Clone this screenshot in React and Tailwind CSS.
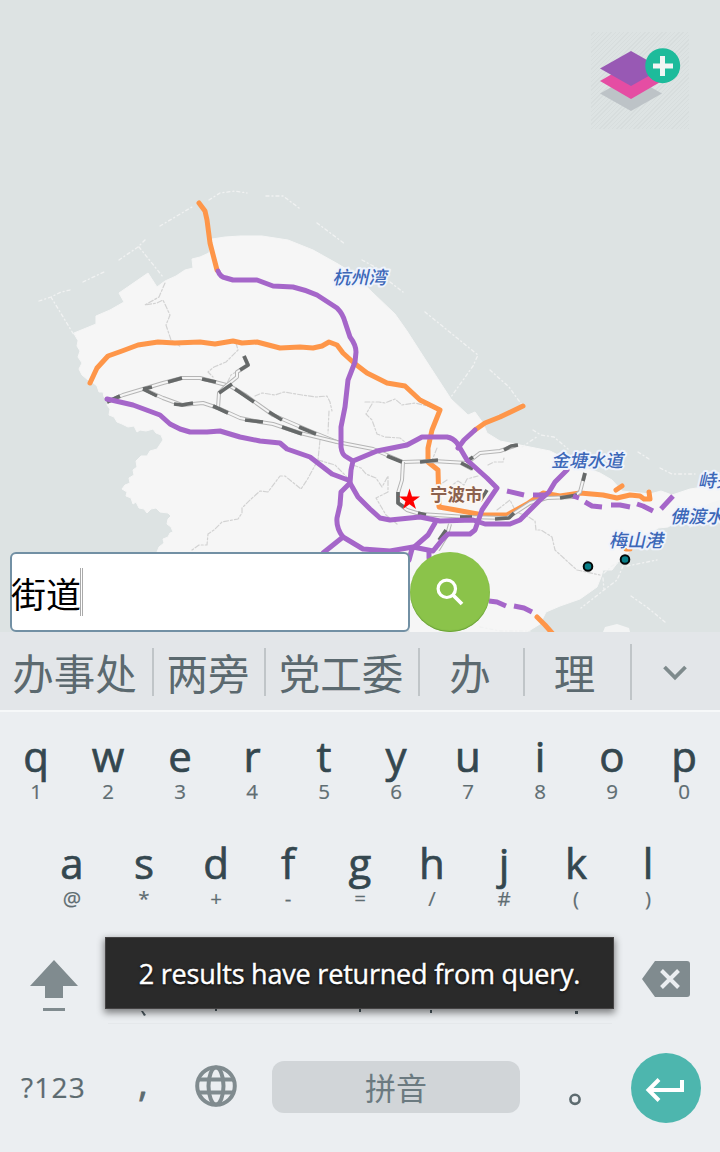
import React from "react";

const LAND =
  "M74 333L96 324L96 316L110 310L124 302L119 293L148 273L157 287L165 281L176 276L185 270L193 268L192 259L200 257L209 253L212 239L225 237L240 236L262 236L288 240L313 250L338 264L356 275L372 292L395 314L407 331L425 359L451 399L468 415L475 412L483 423L487 433L500 441L530 447L550 451L580 466L600 473L612 480L622 491L650 494L661 491L672 495L690 489L710 486L720 480V520L700 508L690 514L668 527L658 528L645 538L628 553L618 562L612 570L603 570L601 577L597 587L580 599L560 606L546 612L540 624L527 632H410V552H157L159 547L164 543L163 539L168 537L170 533L173 532L171 527L167 524L168 519L171 516L168 513L160 512L156 508L151 509L147 513L144 509L139 508L136 502L133 504L131 498L126 496L127 492L122 489L125 485L130 483L129 478L134 475L133 470L137 467L136 461L141 456L147 456L150 451L157 449L163 440L161 435L156 433L153 429L146 431L140 430L137 432L134 426L128 427L122 424L117 422L114 417L109 415L110 409L107 405L108 400L104 397L103 392L99 392L97 386L92 382L88 380L82 375L79 369L82 363L78 357L80 351L77 346L78 341Z";

const PURPLE = [
  "M218 271Q220 277 226 278L233 280H257L273 286L293 287Q306 290 317 295L337 308Q343 314 345 322L350 337Q356 345 356 352L355 362L348 380L345 407L341 427V447Q342 454 345 456L353 461",
  "M353 461L377 451L407 445L422 437H447Q453 438 457 443L467 460L487 478L497 488L482 510L475 530L470 534H448L442 540L433 551L413 547L390 551L363 549L343 537Q336 528 337 518L340 505L341 492L350 483L351 470Z",
  "M350 483L358 497L370 509L380 518L390 520L420 517L440 521L473 520L485 524H510L520 520L540 500L549 492L555 482L567 470",
  "M107 399L133 405L160 415L170 424L180 429L190 432L207 432L220 431L240 437L260 441L280 443L287 449L310 457L332 474L348 480",
  "M343 537L323 553",
  "M435 523L428 535L412 549L409 560",
  "M458 448L464 440L475 430",
  "M429 551V558",
  "M507 491L524 495M533 495H545M573 496L579 498M585 502L592 506L602 507M611 505H620L630 507M637 504L643 506L653 511M661 509L673 496",
  "M489 601L497 602L506 606M514 606L524 608L532 612",
];

const ORANGE = [
  "M199 203L205 211L207 220L210 243L217 270",
  "M90 383L97 368L108 356L122 351L138 345L158 342L175 343L200 342L215 344L233 341L242 343L257 342L280 348L300 347L313 348L322 346L329 342L337 345L343 353L354 363L367 373L387 383L405 386L420 400L430 405L440 410L432 430L428 448L428 462L438 470L439 507L456 510L483 515H507L527 504L543 493L560 496L580 493L603 495L617 498L630 495L640 496L644 499L650 499L649 492",
  "M616 490L622 486",
  "M475 430L485 423L500 417L523 406",
  "M537 617L545 625L553 634",
  "M626 549H630",
];

const RAILS = [
  "M107 402L123 395L143 389L163 383L182 378L200 378L215 382L230 386L245 395L273 415L310 431L337 442L373 449L403 462L433 461L467 463L480 453L500 451L517 445",
  "M143 389L163 398L182 405L203 403L218 408L240 418L260 422L273 424L300 433L337 442",
  "M218 408L219 393L226 386L237 377L237 372L248 365L244 356",
  "M403 462L402 480L398 493V503L407 510L420 514L467 517L507 518L530 503L547 498L573 497L580 492L585 473",
  "M450 524L447 535L438 550",
  "M461 463L472 469",
];

const RAIL_DARK =
  "M107 402L120 396M143 389L152 387M143 389L157 396M168 382L182 378M202 379L216 382M235 389L254 402M269 412L282 420M299 427L316 434M174 404L182 405L193 403M213 406L228 413M245 420L263 422M282 427L302 434M219 393L232 384M240 370L248 365L244 356M387 456L402 462M420 462L438 460M461 463L473 469M466 462L473 457M504 450L511 446L518 445M398 492V503L404 507M418 513L426 515M460 517L472 517M480 501L487 490M495 519L509 518L514 513M560 498L577 495M583 481L585 473M439 540L446 530";

const BORDERS =
  "M165 283L159 297L145 305L157 303L163 300L170 315L166 325L171 340L181 347M236 343L238 350L226 362L214 367L208 372L213 377M247 365L231 375L224 390M255 396L262 393L275 395L284 392L302 395L316 397L327 396L330 402L332 411M329 411L328 433M320 440L318 460L307 480L301 489L285 476L280 476L268 492L260 491L250 500L242 508L242 513L238 519L222 522L214 530L208 534L207 545L199 545L192 550M365 402L379 402L385 403L395 399L402 405L415 403L440 409M372 404L366 414L372 420L377 434L385 437L400 438L410 446M318 460L335 465L348 478M353 465L361 468L366 474L376 478L382 487L388 476L388 492L376 498L386 515L397 524M488 465L494 462L503 462L504 458M497 510L510 500L516 512L527 516L535 521L536 530L541 530L552 537L555 550L568 562L577 570L600 575M447 480L435 488M448 488L458 481L464 485L467 479L478 476M431 463L437 448";

const SEA_BORDERS =
  "M39 301L51 297L61 292L70 290M83 282L106 271M119 260L138 247L145 240M160 226L192 207M209 200L220 193L235 191L247 193M266 196L283 196L299 208M317 223L345 244M362 260L377 268M390 282L403 292M425 312L478 355L473 366L451 397M51 297L74 335M139 247L163 277M490 370L509 387L522 405M533 430L541 435L554 437L568 449M522 447L538 436M638 452L649 459M660 468L672 474H695M604 573L612 566L626 558M627 566L657 560M623 566L617 580L604 590L581 608M603 578L604 590M631 596L648 608L665 622M480 627L500 631H530M690 527L704 518";

function MapLabel({ x, y, size, children }) {
  return (
    <text
      transform={`translate(${x} ${y}) skewX(-13)`}
      fontSize={size}
      fontWeight="500"
      fontFamily="'Noto Sans CJK SC', sans-serif"
      fill="#3c67b8"
      stroke="#eef3fc"
      strokeWidth="4"
      strokeLinejoin="round"
      paintOrder="stroke"
    >
      {children}
    </text>
  );
}

function MapCanvas() {
  return (
    <svg className="block h-[632px] w-[720px]" viewBox="0 0 720 632" fill="none" strokeLinejoin="round" strokeLinecap="round">
      <rect width="720" height="632" fill="#dde3e3" />
      <path d={LAND} fill="#f6f6f6" stroke="#f6f6f6" />
      <path d="M603 632L605 627L617 624L629 628L630 632ZM700 512L710 503L720 500V520L710 520Z" fill="#f3f4f4" />
      <path d={SEA_BORDERS} stroke="#f1f2f2" strokeWidth="1.3" strokeDasharray="3 3 1 3" />
      <path d={BORDERS} stroke="#d2d2d2" strokeWidth="1.2" strokeDasharray="5 2 2 2" />
      {ORANGE.map((d) => (
        <path key={d} d={d} stroke="#fe9649" strokeWidth="5" />
      ))}
      {RAILS.map((d) => (
        <g key={d} strokeLinecap="butt">
          <path d={d} stroke="#b5b5b5" strokeWidth="4" />
          <path d={d} stroke="#f5f5f5" strokeWidth="2" />
        </g>
      ))}
      <path d={RAIL_DARK} stroke="#666969" strokeWidth="3.6" strokeLinecap="butt" />
      {PURPLE.map((d) => (
        <path key={d} d={d} stroke="#a566c9" strokeWidth="5" strokeLinecap={d.split("M").length > 2 ? "butt" : "round"} />
      ))}
      <path d="M409.500 488.500L412 496.500H420L413.500 501.300L416 509L409.500 504.200L403 509L405.500 501.300L399 496.500H407Z" fill="#fe0000" />
      <text x="430" y="501" fontSize="17.500" fontWeight="700" fontFamily="'Noto Sans CJK SC', sans-serif" fill="#8c614d" stroke="#fcf7f2" strokeWidth="4" paintOrder="stroke">
        宁波市
      </text>
      <MapLabel x={332.500} y={284} size={18}>杭州湾</MapLabel>
      <MapLabel x={551} y={466.500} size={18}>金塘水道</MapLabel>
      <MapLabel x={698} y={487} size={18}>峙头洋</MapLabel>
      <MapLabel x={670} y={523} size={18}>佛渡水道</MapLabel>
      <MapLabel x={609} y={547} size={18}>梅山港</MapLabel>
      <circle cx="588" cy="566.500" r="4.300" fill="#087e88" stroke="#050808" strokeWidth="2" />
      <circle cx="625" cy="559.500" r="4.300" fill="#087e88" stroke="#050808" strokeWidth="2" />
    </svg>
  );
}

function LayersButton() {
  return (
    <button className="absolute left-[591px] top-[32px] h-[97px] w-[98px] bg-[repeating-linear-gradient(135deg,#0000_0_2px,#00000007_2px_3px)]">
      <svg className="block h-[97px] w-[98px]" viewBox="591 32 98 97">
        <path d="M600 93.500L631 76L662 93.500L631 111Z" fill="#bdc3c7" />
        <path d="M600 81L631 63L662 81L631 99Z" fill="#e54da3" />
        <path d="M600 68.500L631 51L662 68.500L631 86Z" fill="#9859b4" />
        <circle cx="662.700" cy="65.700" r="17.500" fill="#1dbb9b" />
        <path d="M660 56H665V63.500H673V68.500H665V76H660V68.500H653V63.500H660Z" fill="#f1f5f4" />
      </svg>
    </button>
  );
}

function SearchBar() {
  return (
    <div className="absolute left-[10px] top-[552px] flex h-[80px]">
      <div className="flex h-[80px] w-[400px] items-center rounded-[6px] border-2 border-[#7290a4] bg-white">
        <span className="-ml-px mt-px font-['Noto_Sans_CJK_SC',sans-serif] text-[35px] leading-[40px] text-black">街道</span>
        <span className="-ml-px h-[48px] w-[3px] border-x border-[#aaaaaa]" />
      </div>
      <button className="flex size-[80px] items-center justify-center rounded-full bg-[#8bc34a] shadow-[inset_0_-1px_1px_#689f38]">
        <svg className="size-[80px]" viewBox="0 0 80 80" fill="none" stroke="#fff">
          <circle cx="36.800" cy="36.800" r="8.700" strokeWidth="3.200" />
          <path d="M43 43L52 52" strokeWidth="3.800" />
        </svg>
      </button>
    </div>
  );
}

function Candidate({ width, children }) {
  return (
    <div className={`${width} relative flex h-full items-center justify-center`}>
      <span className="mt-[2px]">{children}</span>
      <span className="absolute right-0 top-[16px] h-[48px] w-[2px] bg-[#c0c5c8]" />
    </div>
  );
}

function CandidateBar() {
  return (
    <div className="flex h-[80px] border-b-2 border-[#f6f8f9] bg-[#e3e6e9] font-['Noto_Sans_CJK_SC',sans-serif] text-[41.500px] leading-[60px] text-[#5b696f]">
      <Candidate width="w-[154px] pr-[5px]">办事处</Candidate>
      <Candidate width="w-[112px] pr-[4px]">两旁</Candidate>
      <Candidate width="w-[154px] pr-[4px]">党工委</Candidate>
      <Candidate width="w-[105px] pr-[5px]">办</Candidate>
      <div className="flex w-[105px] items-center justify-center pr-[6px]">
        <span className="mt-[2px]">理</span>
      </div>
      <div className="mt-[12px] h-[56px] w-[2px] bg-[#c0c5c8]" />
      <svg className="h-[78px] w-[88px]" viewBox="632 632 88 78" fill="none">
        <path d="M664.500 667L675 677.500L685.500 667" stroke="#7e8a8c" strokeWidth="3.800" />
      </svg>
    </div>
  );
}

function Key({ label, sub }) {
  return (
    <div className="flex w-[72px] flex-col items-center">
      <span className="h-[46px] text-[42px] leading-[46px] text-[#34474f] [-webkit-text-stroke:0.7px_#34474f]">{label}</span>
      <span className="h-[24px] text-[20.500px] leading-[24px] text-[#5f6d72] [-webkit-text-stroke:0.2px_#5f6d72]">{sub}</span>
    </div>
  );
}

const ROW_ONE = [["q", "1"], ["w", "2"], ["e", "3"], ["r", "4"], ["t", "5"], ["y", "6"], ["u", "7"], ["i", "8"], ["o", "9"], ["p", "0"]];
const ROW_TWO = [["a", "@"], ["s", "*"], ["d", "+"], ["f", "-"], ["g", "="], ["h", "/"], ["j", "#"], ["k", "("], ["l", ")"]];

function Toast() {
  return (
    <div className="absolute left-[105px] top-[937px] flex h-[72px] w-[509px] items-center justify-center border border-[#454344] bg-[#2a2a2a] shadow-[0_3px_7px_1px_#00000075]">
      <span className="mt-[2px] whitespace-nowrap text-[27px] tracking-[-0.200px] text-white [-webkit-text-stroke:0.4px_#fff] [text-shadow:0_1px_3px_#000]">
        2 results have returned from query.
      </span>
    </div>
  );
}

export default function App() {
  return (
    <main className="relative flex h-[1152px] w-[720px] flex-col overflow-hidden bg-[#ebeef1] font-['Open_Sans',sans-serif]">
      <section className="relative h-[632px] shrink-0">
        <MapCanvas />
        <LayersButton />
        <SearchBar />
      </section>
      <CandidateBar />
      <section className="flex flex-col">
        <div className="flex h-[107px] pt-[21px]">
          {ROW_ONE.map(([label, sub]) => (
            <Key key={label} label={label} sub={sub} />
          ))}
        </div>
        <div className="flex h-[107px] justify-center pt-[21px]">
          {ROW_TWO.map(([label, sub]) => (
            <Key key={label} label={label} sub={sub} />
          ))}
        </div>
        <div className="flex h-[107px] justify-between">
          <svg className="h-[107px] w-[108px]" viewBox="0 926 108 107" fill="#808b8f">
            <path d="M54 960L78 986H63V998H45V986H30ZM43 1008H65V1011H43Z" />
          </svg>
          <svg className="h-[107px] w-[504px]" viewBox="108 926 504 107" fill="#4c5960">
            <path d="M141 1011L143 1011L146 1015L144 1016ZM215 1008H217V1011H215ZM359 1008H361V1012H359ZM430 1010H432V1013H430ZM575 1011H578V1014H575Z" />
            <path d="M108 1023H612V1024H108Z" fill="#e5e8eb" />
          </svg>
          <svg className="h-[107px] w-[108px]" viewBox="612 926 108 107" fill="none">
            <path d="M655 961H687Q690 961 690 964V994Q690 997 687 997H655L642 979Z" fill="#808b8f" />
            <path d="M661.500 970.500L678.500 987.500M678.500 970.500L661.500 987.500" stroke="#ebeef1" strokeWidth="4" />
          </svg>
        </div>
        <div className="flex h-[107px] items-center text-[#5d6b70]">
          <div className="w-[108px] pl-[21px] text-[28px] leading-[40px] tracking-[1.200px] [-webkit-text-stroke:0.2px_#5d6b70]">?123</div>
          <div className="-mt-[8px] w-[72px] pr-[2px] text-center text-[36px] leading-[50px] [-webkit-text-stroke:0.9px_#5d6b70]">,</div>
          <div className="-mt-px flex w-[72px] justify-center">
            <svg className="size-[42px]" viewBox="195 1065 42 42" fill="none" stroke="#808b8f" strokeWidth="4">
              <circle cx="216" cy="1086" r="18.800" />
              <ellipse cx="216" cy="1086" rx="7.500" ry="18.500" />
              <path d="M199 1079.500H233M199 1092.500H233" />
            </svg>
          </div>
          <div className="ml-[20px] flex h-[52px] w-[248px] items-center justify-center rounded-[12px] bg-[#d1d5d8] font-['Noto_Sans_CJK_SC',sans-serif] text-[31px] leading-[40px] text-[#6b7a80]">
            拼音
          </div>
          <svg className="ml-[20px] h-[107px] w-[72px]" viewBox="540 1033 72 107" fill="none">
            <circle cx="575" cy="1099.300" r="4.600" stroke="#5d6b70" strokeWidth="2.600" />
          </svg>
          <svg className="h-[107px] w-[108px]" viewBox="612 1033 108 107" fill="none">
            <circle cx="666" cy="1088" r="35" fill="#4db6ae" />
            <path d="M682 1080V1090H649M659 1079.500L648.500 1090L659 1100.500" stroke="#fff" strokeWidth="4" />
          </svg>
        </div>
      </section>
      <Toast />
    </main>
  );
}
